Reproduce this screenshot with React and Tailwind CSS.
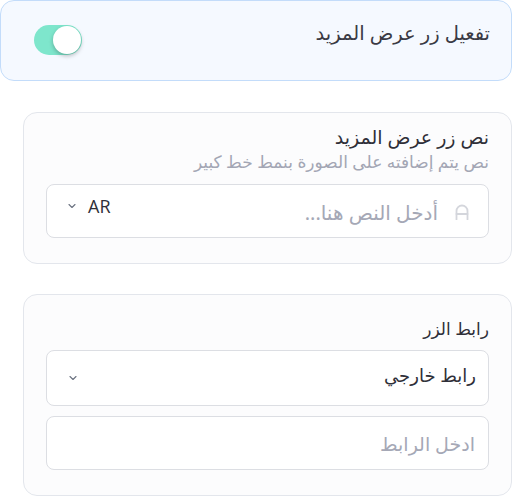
import React, { useState } from 'react';
import { ChevronDown } from 'lucide-react';

const font = { fontFamily: '"Noto Sans", "DejaVu Sans", sans-serif' };

function LetterIcon() {
  return (
    <svg width="14" height="16" viewBox="0 0 14 16" fill="none" stroke="#d4d6dc" strokeWidth="1.8" strokeLinecap="round">
      <path d="M1.5 15.5V7a5.5 5.5 0 0 1 11 0v8.5" />
      <path d="M1.5 10h11" />
    </svg>
  );
}

export default function App() {
  const [enabled, setEnabled] = useState(true);

  return (
    <div dir="rtl" className="w-[512px] h-[496px] bg-white text-[#3a3a44]" style={font}>
      {/* toggle row */}
      <div className="h-[81px] w-[512px] rounded-[14px] border border-[#c3dcfa] bg-[#f5f9ff] flex items-start justify-between pr-[21px] pl-[33px] pt-[19px]">
        <span className="text-[19.5px] leading-[26px]">تفعيل زر عرض المزيد</span>
        <button
          onClick={() => setEnabled(!enabled)}
          className="relative mt-[5px] w-[48px] h-[30px] rounded-full bg-[#7ee6cc]"
        >
          <span className="absolute top-[1px] left-[19px] w-[28px] h-[28px] rounded-full bg-white shadow-[0_2px_4px_rgba(0,0,0,0.25)]" />
        </button>
      </div>

      {/* button text card */}
      <div className="mt-[31px] ml-[23px] h-[152px] rounded-[14px] border border-[#e3e6ec] bg-[#fcfcfd] px-[22px] pt-[12px]">
        <div className="text-[19px] leading-[25px] text-[#2f2f38]">نص زر عرض المزيد</div>
        <div className="text-[17px] leading-[24px] text-[#a3a6b4]">نص يتم إضافته على الصورة بنمط خط كبير</div>
        <div className="mt-[10px] h-[54px] rounded-[8px] border border-[#dcdee3] bg-white flex items-start pr-[19px] pl-[19px] pt-[9px]">
          <div className="flex items-center gap-[17px] mt-[3px] flex-1">
            <LetterIcon />
            <span className="text-[20px] text-[#a5a8b6] leading-[26px] mt-[3px]">أدخل النص هنا...</span>
          </div>
          <div className="flex items-center gap-[10px]">
            <span dir="ltr" className="text-[18px] leading-[24px] text-[#2f2f38]" style={{ fontFamily: '"Open Sans", sans-serif' }}>AR</span>
            <ChevronDown size={12} strokeWidth={2.2} color="#6b7280" />
          </div>
        </div>
      </div>

      {/* button link card */}
      <div className="mt-[30px] ml-[23px] h-[202px] rounded-[14px] border border-[#e3e6ec] bg-[#fcfcfd] px-[22px] pt-[22px]">
        <div className="text-[17px] leading-[24px] text-[#2f2f38]">رابط الزر</div>
        <div className="mt-[9px] h-[56px] rounded-[8px] border border-[#dcdee3] bg-white flex items-center justify-between pr-[12px] pl-[20px]">
          <span className="text-[18px] leading-[24px] text-[#2f2f38] -mt-[6px]">رابط خارجي</span>
          <ChevronDown size={12} strokeWidth={2.2} color="#6b7280" />
        </div>
        <div className="mt-[10px] h-[54px] rounded-[8px] border border-[#dcdee3] bg-white flex items-center pr-[13px]">
          <span className="text-[19px] leading-[24px] text-[#a5a8b6] mt-[2px]">ادخل الرابط</span>
        </div>
      </div>
    </div>
  );
}
